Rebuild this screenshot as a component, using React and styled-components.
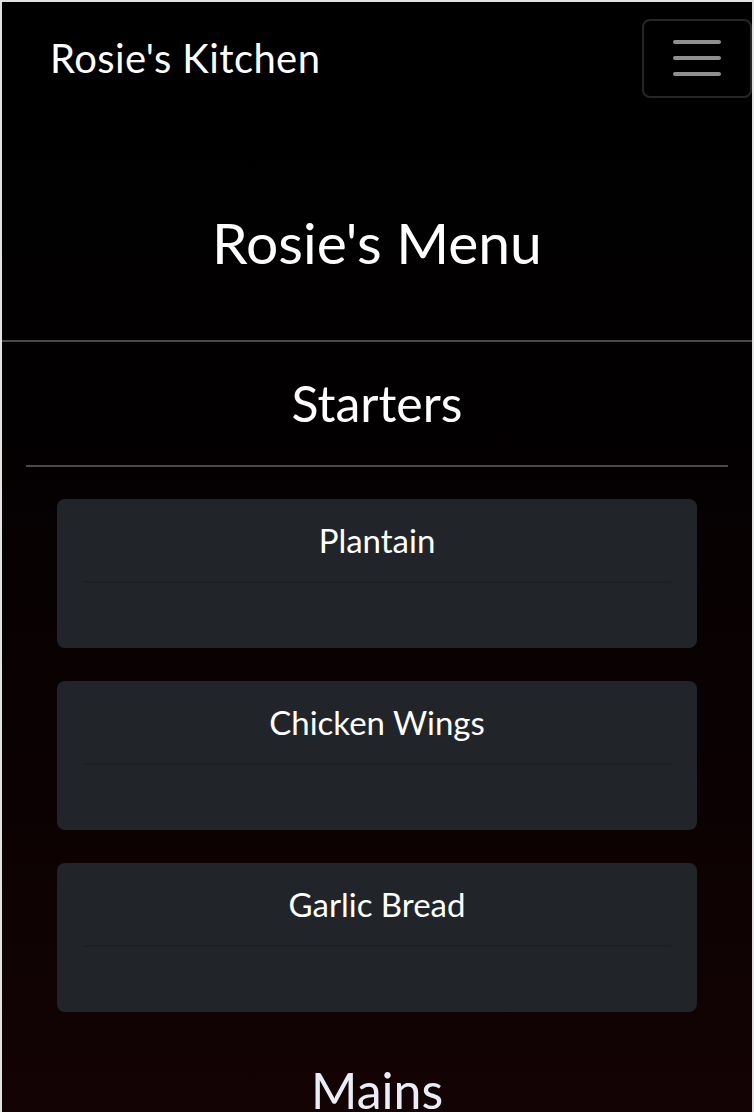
import React from "react";
import styled, { createGlobalStyle } from "styled-components";

const Global = createGlobalStyle`
  html, body { margin: 0; padding: 0; background: #e4e4e4; }
  body { font-family: "Lato", "Open Sans", sans-serif; font-weight: 300; }
  * { box-sizing: border-box; }
`;

const Page = styled.div`
  width: 754px;
  min-height: 1112px;
  border: 2px solid #e2e2e2;
  border-bottom: none;
  background: linear-gradient(to bottom, #000 0%, #030001 35%, #140304 100%);
  color: #fff;
  overflow: hidden;
`;

const Nav = styled.nav`
  height: 112px;
  display: flex;
  align-items: center;
  justify-content: space-between;
  padding: 0 0 0 48px;
  background: #000;
`;

const Brand = styled.a`
  font-size: 40px;
  font-weight: 400;
  color: #fff;
  text-decoration: none;
  letter-spacing: 0.4px;
`;

const Toggler = styled.button`
  width: 110px;
  height: 79px;
  border: 2px solid #262626;
  border-radius: 8px;
  background: transparent;
  display: flex;
  flex-direction: column;
  align-items: center;
  justify-content: center;
  gap: 12px;
  padding: 0;
`;

const Bar = styled.span`
  display: block;
  width: 48px;
  height: 4px;
  border-radius: 2px;
  background: #8f8f8f;
`;

const Hero = styled.header`
  padding: 95px 0 64px;
  text-align: center;
`;

const Title = styled.h1`
  margin: 0;
  font-size: 57px;
  line-height: 67px;
  font-weight: 400;
`;

const Rule = styled.hr`
  margin: ${(p) => p.$m || "0"};
  border: none;
  height: 2px;
  background: #4b4a4b;
`;

const Section = styled.section`
  text-align: center;
`;

const SectionTitle = styled.h2`
  margin: ${(p) => p.$top}px 0 32px;
  font-size: 50px;
  line-height: 60px;
  font-weight: 400;
  color: ${(p) => p.$color || "#fff"};
`;

const CardList = styled.div`
  display: flex;
  flex-direction: column;
  gap: 33px;
  padding: 32px 55px 0;
`;

const Card = styled.div`
  height: 149px;
  background: #212529;
  border-radius: 8px;
  display: flex;
  flex-direction: column;
  padding: 0 26px;
`;

const CardHeader = styled.div`
  height: 84px;
  border-bottom: 2px solid #1c1f23;
  display: flex;
  align-items: flex-start;
  justify-content: center;
  padding-top: 21px;
`;

const CardTitle = styled.h5`
  margin: 0;
  font-size: 33px;
  line-height: 40px;
  font-weight: 400;
  color: #fff;
`;

const starters = ["Plantain", "Chicken Wings", "Garlic Bread"];

export default function App() {
  return (
    <>
      <Global />
      <Page>
        <Nav>
          <Brand href="#">Rosie's Kitchen</Brand>
          <Toggler aria-label="Toggle navigation">
            <Bar />
            <Bar />
            <Bar />
          </Toggler>
        </Nav>
        <Hero>
          <Title>Rosie's Menu</Title>
        </Hero>
        <Rule />
        <Section>
          <SectionTitle $top={31}>Starters</SectionTitle>
          <Rule $m="0 24px" />
          <CardList>
            {starters.map((s) => (
              <Card key={s}>
                <CardHeader>
                  <CardTitle>{s}</CardTitle>
                </CardHeader>
              </Card>
            ))}
          </CardList>
        </Section>
        <Section>
          <SectionTitle $top={48} $color="#e9eef6">Mains</SectionTitle>
        </Section>
      </Page>
    </>
  );
}
